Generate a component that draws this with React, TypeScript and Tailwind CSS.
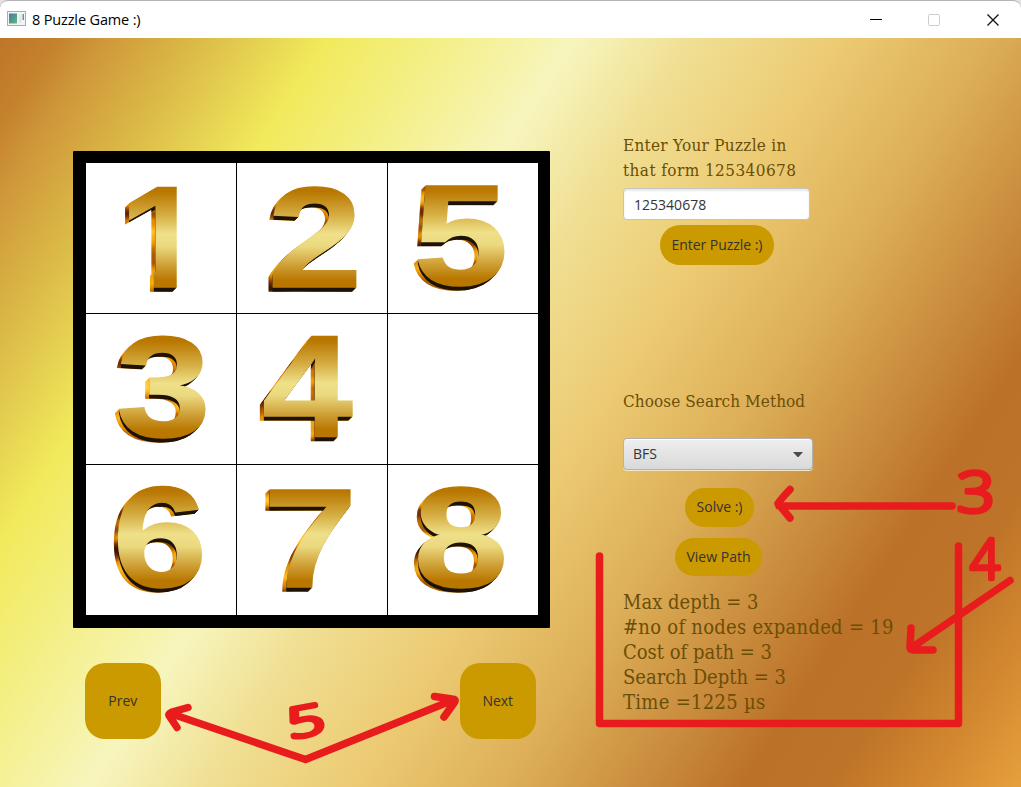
import React from "react";

type Tile = { digit: string; cx: number; base: number; sx: number; size: number; clip?: string };

const tiles: (Tile | null)[] = [
  { digit: "1", cx: 77.3, base: 123.5, sx: 1.1, size: 145, clip: "url(#stem)" },
  { digit: "2", cx: 78, base: 123.5, sx: 1.2, size: 142 },
  { digit: "5", cx: 73, base: 122, sx: 1.2, size: 142 },
  { digit: "3", cx: 77.5, base: 122, sx: 1.2, size: 142 },
  { digit: "4", cx: 70.5, base: 121.5, sx: 1.13, size: 144 },
  null,
  { digit: "6", cx: 74, base: 121.5, sx: 1.2, size: 142 },
  { digit: "7", cx: 73, base: 121.5, sx: 1.2, size: 141 },
  { digit: "8", cx: 73, base: 121.5, sx: 1.2, size: 142 },
];

function Defs() {
  return (
    <svg className="absolute size-0" aria-hidden="true">
      <defs>
        <linearGradient id="gold" gradientUnits="userSpaceOnUse" x1="0" y1="-101" x2="0" y2="0">
          <stop offset="0.06" stopColor="#b97700" />
          <stop offset="0.3" stopColor="#d6af45" />
          <stop offset="0.48" stopColor="#efe089" />
          <stop offset="0.6" stopColor="#ebd97f" />
          <stop offset="0.78" stopColor="#d0a33a" />
          <stop offset="0.94" stopColor="#b97700" />
        </linearGradient>
        <clipPath id="stem">
          <path d="M-60 -110H12.200V6H-8.500V-30H-60Z" />
        </clipPath>
        <filter
          id="bevel"
          filterUnits="userSpaceOnUse"
          x="0"
          y="0"
          width="150"
          height="150"
          colorInterpolationFilters="sRGB"
        >
          <feOffset in="SourceAlpha" dx="-1" dy="1" result="d1" />
          <feOffset in="SourceAlpha" dx="-2" dy="2" result="d2" />
          <feOffset in="SourceAlpha" dx="-3" dy="3" result="d3" />
          <feOffset in="SourceAlpha" dx="-4" dy="3.500" result="d4" />
          <feMerge result="side">
            <feMergeNode in="d1" />
            <feMergeNode in="d2" />
            <feMergeNode in="d3" />
            <feMergeNode in="d4" />
          </feMerge>
          <feOffset in="SourceAlpha" dx="0" dy="2" result="v2" />
          <feOffset in="SourceAlpha" dx="0" dy="4" result="v4" />
          <feMerge result="below">
            <feMergeNode in="v2" />
            <feMergeNode in="v4" />
          </feMerge>
          <feTurbulence type="fractalNoise" baseFrequency="0.02 0.05" numOctaves="2" seed="4" />
          <feColorMatrix values="1 0 0 0 0  1 0 0 0 0  1 0 0 0 0  0 0 0 0 1" />
          <feComponentTransfer result="streaks">
            <feFuncR type="table" tableValues="0.2 0.2 0.5 0.9 1 1 1" />
            <feFuncG type="table" tableValues="0.05 0.05 0.22 0.55 0.75 0.9 1" />
            <feFuncB type="table" tableValues="0 0 0 0 0.15 0.4 0.5" />
          </feComponentTransfer>
          <feComposite in="streaks" in2="side" operator="in" result="sideFill" />
          <feFlood floodColor="#1c1206" />
          <feComposite in2="below" operator="in" />
          <feComposite in2="side" operator="in" result="belowFill" />
          <feMerge>
            <feMergeNode in="sideFill" />
            <feMergeNode in="belowFill" />
            <feMergeNode in="SourceGraphic" />
          </feMerge>
        </filter>
      </defs>
    </svg>
  );
}

function GoldTile({ tile }: { tile: Tile | null }) {
  return (
    <div className="size-[150px] bg-white">
      {tile && (
        <svg viewBox="0 0 150 150" className="block size-full overflow-visible">
          <g filter="url(#bevel)">
            <g transform={`translate(${tile.cx} ${tile.base}) scale(${tile.sx} 1)`}>
              <text
                textAnchor="middle"
                fontSize={tile.size}
                fill="url(#gold)"
                stroke="url(#gold)"
                strokeWidth="1.5"
                clipPath={tile.clip}
                className="font-['Liberation_Sans',sans-serif] font-bold"
              >
                {tile.digit}
              </text>
            </g>
          </g>
        </svg>
      )}
    </div>
  );
}

function GoldButton({ className, children }: { className: string; children: React.ReactNode }) {
  return (
    <button
      className={`shrink-0 rounded-[20px] bg-[#cb9900] pb-[2px] text-[14px] whitespace-nowrap text-[#333] ${className}`}
    >
      {children}
    </button>
  );
}

function TitleBar() {
  return (
    <header className="flex h-[38px] items-center rounded-t-lg border-t border-[#b4b4b4] bg-white pl-[7px]">
      <svg width="19" height="15" viewBox="0 0 19 15" className="mb-[2px] shrink-0">
        <defs>
          <linearGradient id="screen" x1="0" y1="0" x2="1" y2="1">
            <stop offset="0" stopColor="#4778a5" />
            <stop offset="1" stopColor="#5cba78" />
          </linearGradient>
        </defs>
        <rect x="0.5" y="0.5" width="18" height="14" fill="#f3f4f6" stroke="#a9adb2" />
        <rect x="2" y="2.5" width="8" height="10" fill="url(#screen)" />
        <rect x="12" y="3" width="2.5" height="9" fill="#e4e6e8" />
        <rect x="15.5" y="3" width="1.5" height="6" fill="#5c9a93" />
      </svg>
      <h1 className="ml-[6px] text-[14.500px] tracking-[-0.150px] text-black">8 Puzzle Game :)</h1>
      <div className="ml-auto flex items-center">
        <svg width="151" height="16" viewBox="0 0 151 16" fill="none">
          <path d="M0 7.5H12" stroke="#000" />
          <rect x="58.5" y="2.5" width="11" height="11" rx="1" stroke="#ccc" />
          <path d="M117.500 2.500L128.500 13.500M128.500 2.500L117.500 13.500" stroke="#111" strokeWidth="1.3" />
        </svg>
      </div>
    </header>
  );
}

function Annotations() {
  return (
    <svg
      viewBox="0 0 1021 787"
      className="pointer-events-none absolute inset-0 size-full"
      fill="none"
      stroke="#e81c1c"
      strokeWidth="7.5"
      strokeLinecap="round"
      strokeLinejoin="round"
    >
      <path d="M952 506H779M790 489.500Q781 499 778 503.500Q785 512 790 518" />
      <path d="M599.500 556V723.500H958.500V546" />
      <path d="M1010 580.500L914 646M911 628L910 647Q910 650 914 650H933" />
      <path d="M452 700.500L305.500 759.500L172 714M188 707.500L172 712Q167 714 170 717L177 727.500M434.500 696.500L452 699Q457 699 454 703L444 717" />
      <g fill="#e81c1c" strokeWidth="4.5" className="font-['Open_Sans',sans-serif] font-light">
        <text transform="translate(957 511.500) scale(1.200 1)" fontSize="55">3</text>
        <text transform="translate(970 578.500) scale(0.950 1)" fontSize="55">4</text>
        <text transform="translate(290 739) rotate(-10) scale(1.550 1)" fontSize="42">5</text>
      </g>
    </svg>
  );
}

export default function App() {
  return (
    <div className="relative flex h-[787px] w-[1021px] flex-col overflow-hidden bg-[#e4e4e4] font-['Open_Sans','Noto_Sans',sans-serif]">
      <Defs />
      <TitleBar />
      <main className="flex flex-1 bg-[linear-gradient(123deg,#be7528_0%,#c5832e_4%,#cf983a_7%,#dcbc48_13.500%,#f1ea5c_21.700%,#f4ef85_29%,#f7f5bd_38.200%,#f0df93_46%,#ecca72_56%,#dcae57_66%,#c98b3c_75%,#bb7128_81.500%,#bd7328_87%,#d0852e_93%,#e6a03d_100%)] pl-[73px]">
        <section className="w-[550px] pt-[113px]">
          <div className="grid h-[477px] w-[477px] grid-cols-[repeat(3,150px)] content-start gap-px rounded-[1px] bg-black pt-[12px] pl-[13px]">
            {tiles.map((tile, i) => (
              <GoldTile key={i} tile={tile} />
            ))}
          </div>
          <div className="mt-[35px] ml-[12px] flex w-[450.500px] justify-between">
            <GoldButton className="h-[76px] w-[75.500px]">Prev</GoldButton>
            <GoldButton className="h-[76px] w-[75.500px]">Next</GoldButton>
          </div>
        </section>

        <section className="flex w-[300px] flex-col pt-[95px]">
          <label className="flex flex-col font-['DejaVu_Serif_Condensed','DejaVu_Serif',serif] text-[17px] leading-[25px] whitespace-nowrap text-[#6b4e06]">
            <span className="tracking-[0.280px]">Enter Your Puzzle in</span>
            <span className="tracking-[0.430px]">that form 125340678</span>
          </label>
          <input
            className="mt-[5px] h-[32px] w-[187px] rounded-[4px] border border-[#c4c4c4] bg-white px-[10px] text-[14px] tracking-[0.020px] text-[#333] shadow-[inset_0_2px_2px_#e9e9e9] outline-none"
            defaultValue="125340678"
          />
          <GoldButton className="mt-[5px] ml-[37px] h-[40px] w-[114px] tracking-[-0.050px]">Enter Puzzle :)</GoldButton>
          <p className="mt-[124px] font-['DejaVu_Serif_Condensed','DejaVu_Serif',serif] text-[17px] leading-[25px] tracking-[0.080px] whitespace-nowrap text-[#6b4e06]">
            Choose Search Method
          </p>
          <div className="mt-[24px] flex h-[32px] w-[190px] shrink-0 items-center justify-between rounded-[4px] border border-[#b2b2b2] bg-linear-to-b from-[#efefef] to-[#d9d9d9] pr-[9px] pl-[9px] text-[14px] text-[#333] shadow-[inset_0_1px_0_#fff,0_1px_0_#f3e5c8]">
            <span className="pb-[2px]">BFS</span>
            <svg width="10" height="5" viewBox="0 0 10 5">
              <path d="M0 0H10L5.500 5H4.500Z" fill="#4b4b4b" />
            </svg>
          </div>
          <GoldButton className="mt-[18px] ml-[62px] h-[39px] w-[69px]">Solve :)</GoldButton>
          <GoldButton className="mt-[11px] ml-[52px] h-[38px] w-[87px]">View Path</GoldButton>
          <div className="mt-[14px] flex flex-col font-['DejaVu_Serif_Condensed','DejaVu_Serif',serif] text-[20px] leading-[25px] whitespace-nowrap text-[#6b4e06]">
            <span>Max depth = 3</span>
            <span className="tracking-[0.270px]">#no of nodes expanded = 19</span>
            <span>Cost of path = 3</span>
            <span>Search Depth = 3</span>
            <span className="tracking-[0.300px]">Time =1225 µs</span>
          </div>
        </section>
      </main>
      <Annotations />
    </div>
  );
}
